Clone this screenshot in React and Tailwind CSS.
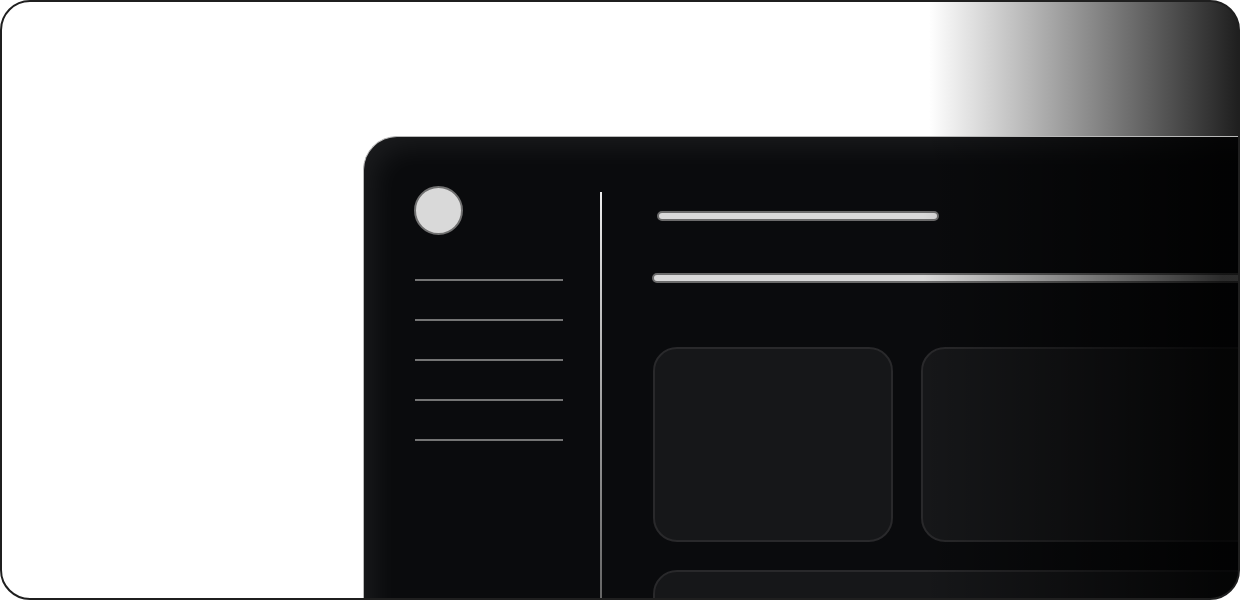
export default function App() {
  const navLines = [0, 1, 2, 3, 4];

  return (
    <div className="w-[1240px] h-[600px] bg-white">
      <div className="w-full h-full rounded-[30px] border-2 border-[#1f1f1f] overflow-hidden bg-[linear-gradient(to_right,#ffffff_75%,#1f1f1f_100%)] pl-[361px] pt-[134px]">
        <div className="relative w-[900px] h-[520px] shrink-0 rounded-tl-[34px] border-l border-t border-[#b8b8b8] bg-[#0a0b0d] shadow-[inset_10px_10px_28px_rgba(255,255,255,0.07)] flex overflow-hidden">
          {/* sidebar */}
          <div className="w-[236px] shrink-0 pl-[50px] pt-[49px] flex flex-col">
            <div className="w-[49px] h-[49px] shrink-0 rounded-full bg-[#d9d9d9] border-2 border-[#707070]" />
            <div className="mt-[44px] ml-px flex flex-col gap-[38px] shrink-0">
              {navLines.map((i) => (
                <div key={i} className="w-[148px] h-[2px] shrink-0 bg-[#747474]" />
              ))}
            </div>
          </div>

          {/* divider */}
          <div className="mt-[55px] w-[2px] shrink-0 self-stretch bg-gradient-to-b from-[#ececec] via-[#9a9a9a] to-[#555555]" />

          {/* content */}
          <div className="flex-1 pl-[50px] pt-[74px] flex flex-col">
            <div className="ml-[5px] w-[282px] h-[10px] shrink-0 rounded-full bg-[#d9d9d9] border-2 border-[#6b6b6b]" />
            <div className="mt-[52px] w-[700px] h-[10px] shrink-0 rounded-full bg-[#d9d9d9] border-2 border-[#6b6b6b]" />
            <div className="mt-[64px] ml-px flex gap-[28px] shrink-0">
              <div className="w-[240px] h-[195px] shrink-0 rounded-3xl bg-[#161719] border-2 border-[#29292b]" />
              <div className="w-[400px] h-[195px] shrink-0 rounded-3xl bg-[#161719] border-2 border-[#29292b]" />
            </div>
            <div className="mt-[28px] ml-px w-[700px] h-[200px] shrink-0 rounded-3xl bg-[#161719] border-2 border-[#29292b]" />
          </div>

          {/* right fade */}
          <div className="pointer-events-none absolute inset-y-0 right-0 w-[340px] bg-[linear-gradient(to_right,rgba(0,0,0,0)_0%,rgba(0,0,0,0.8)_88%)]" />
        </div>
      </div>
    </div>
  );
}
